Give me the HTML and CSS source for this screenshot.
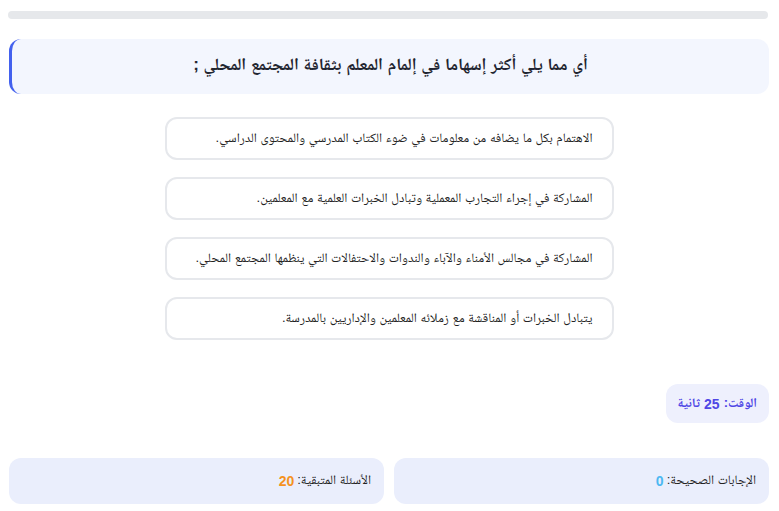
FILE: index.html
```html
<!DOCTYPE html>
<html lang="ar" dir="rtl">
<head>
<meta charset="utf-8">
<title>اختبار</title>
<link rel="stylesheet" href="styles.css">
</head>
<body>
<div class="quiz">
  <div class="progress"><div class="progress-fill" style="width:0%"></div></div>
  <div class="question">أي مما يلي أكثر إسهاما في إلمام المعلم بثقافة المجتمع المحلي ;</div>
  <div class="options">
    <div class="option">الاهتمام بكل ما يضافه من معلومات في ضوء الكتاب المدرسي والمحتوى الدراسي.</div>
    <div class="option">المشاركة في إجراء التجارب المعملية وتبادل الخبرات العلمية مع المعلمين.</div>
    <div class="option">المشاركة في مجالس الأمناء والآباء والندوات والاحتفالات التي ينظمها المجتمع المحلي.</div>
    <div class="option">يتبادل الخبرات أو المناقشة مع زملائه المعلمين والإداريين بالمدرسة.</div>
  </div>
  <div class="timer-row">
    <div class="timer">الوقت: <b class="num">25</b> ثانية</div>
  </div>
  <div class="stats">
    <div class="stat">الإجابات الصحيحة: <b class="num correct">0</b></div>
    <div class="stat">الأسئلة المتبقية: <b class="num remaining">20</b></div>
  </div>
</div>
</body>
</html>
```
FILE: styles.css
```css
html, body {
  margin: 0;
  padding: 0;
  background: #ffffff;
}
body {
  font-family: "Liberation Sans", "Noto Naskh Arabic", sans-serif;
  color: #222;
}
.quiz {
  width: 760px;
  padding: 11px 10px 0 9px;
  display: flex;
  flex-direction: column;
}
.progress {
  height: 8px;
  border-radius: 4px;
  background: #e6e8eb;
  margin-left: -1px;
  margin-right: 1px;
  overflow: hidden;
}
.progress-fill {
  height: 100%;
  background: #4361ee;
}
.question {
  margin-top: 20px;
  height: 55px;
  box-sizing: border-box;
  background: #f3f6fe;
  border-left: 3px solid #4361ee;
  border-radius: 12px;
  display: flex;
  align-items: center;
  justify-content: center;
  font-size: 17px;
  font-weight: bold;
  color: #1f2530;
}
.options {
  margin-top: 23px;
  display: flex;
  flex-direction: column;
  align-items: center;
  gap: 17px;
}
.option {
  width: 449px;
  height: 43px;
  box-sizing: border-box;
  border: 2px solid #e6e8ec;
  border-radius: 12px;
  background: #fff;
  display: flex;
  align-items: center;
  padding: 0 19px;
  font-size: 13px;
  color: #222;
}
.timer-row {
  margin-top: 44px;
  display: flex;
}
.timer {
  height: 39px;
  box-sizing: border-box;
  padding: 0 12px 0 12px;
  display: flex;
  align-items: center;
  gap: 4px;
  background: #eef0fd;
  border-radius: 12px;
  color: #4f46e5;
  font-size: 13px;
  font-weight: bold;
}
.num {
  font-family: "Liberation Sans", Arial, sans-serif;
  font-size: 14px;
  font-weight: bold;
}
.stats {
  margin-top: 35px;
  display: grid;
  grid-template-columns: 1fr 1fr;
  gap: 10px;
}
.stat {
  height: 46px;
  box-sizing: border-box;
  padding: 0 13px;
  display: flex;
  align-items: center;
  gap: 3px;
  background: #eaeefc;
  border-radius: 12px;
  font-size: 13px;
  color: #222;
}
.correct { color: #4cb8f2; }
.remaining { color: #f5921e; }
```
